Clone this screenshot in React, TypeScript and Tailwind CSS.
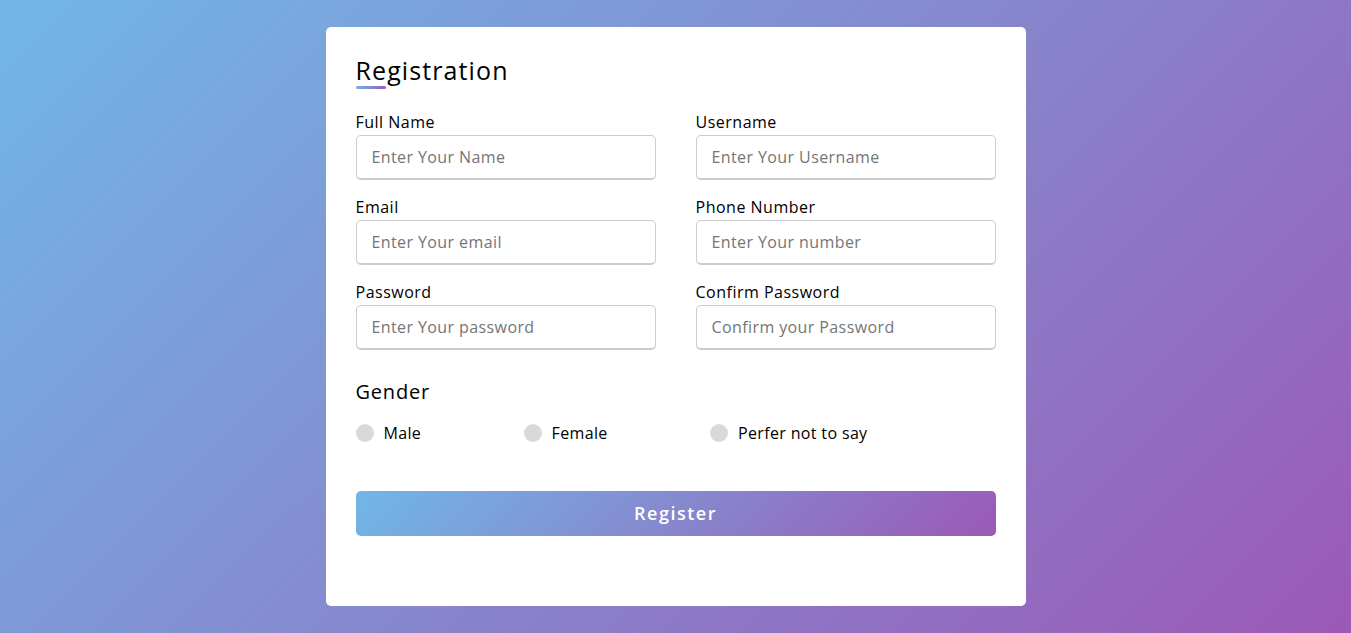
import React from 'react'

const fields = [
  { label: 'Full Name', placeholder: 'Enter Your Name' },
  { label: 'Username', placeholder: 'Enter Your Username' },
  { label: 'Email', placeholder: 'Enter Your email' },
  { label: 'Phone Number', placeholder: 'Enter Your number' },
  { label: 'Password', placeholder: 'Enter Your password' },
  { label: 'Confirm Password', placeholder: 'Confirm your Password' },
]

const genders = ['Male', 'Female', 'Perfer not to say']

export default function App() {
  return (
    <div className="min-h-screen flex items-center justify-center bg-[linear-gradient(135deg,#71b7e6,#9b59b6)] font-['Open_Sans',sans-serif] text-black">
      <div className="w-[700px] bg-white rounded-[5px] px-[30px] pt-[25px] pb-[70px]">
        <div className="relative text-[25px] font-medium leading-[37px] tracking-[1.1px]">
          Registration
          <span className="absolute left-0 bottom-0 h-[3px] w-[30px] rounded-[5px] bg-[linear-gradient(135deg,#71b7e6,#9b59b6)]" />
        </div>

        <form onSubmit={(e) => e.preventDefault()}>
          <div className="mt-[21px] mb-[12px] grid grid-cols-2 gap-x-[40px]">
            {fields.map((f) => (
              <div key={f.label} className="mb-[15px]">
                <span className="block text-[16px] leading-[24px] font-medium mb-[1px] tracking-[0.5px]">{f.label}</span>
                <input
                  type="text"
                  placeholder={f.placeholder}
                  className="w-full h-[45px] rounded-[5px] pl-[15px] text-[16px] tracking-[0.4px] border border-[#ccc] border-b-2 outline-none placeholder:text-[#757575]"
                />
              </div>
            ))}
          </div>

          <div className="text-[20px] font-medium leading-[30px] tracking-[0.8px]">Gender</div>
          <div className="w-4/5 my-[14px] flex justify-between">
            {genders.map((g) => (
              <label key={g} className="flex items-center h-[24px] text-[16px] tracking-[0.35px]">
                <span className="h-[18px] w-[18px] rounded-full bg-[#d9d9d9] mr-[10px]" />
                {g}
              </label>
            ))}
          </div>

          <button
            type="submit"
            className="mt-[32px] w-full h-[45px] rounded-[5px] text-white text-[18px] font-semibold tracking-[1.5px] bg-[linear-gradient(135deg,#71b7e6,#9b59b6)]"
          >
            Register
          </button>
        </form>
      </div>
    </div>
  )
}
